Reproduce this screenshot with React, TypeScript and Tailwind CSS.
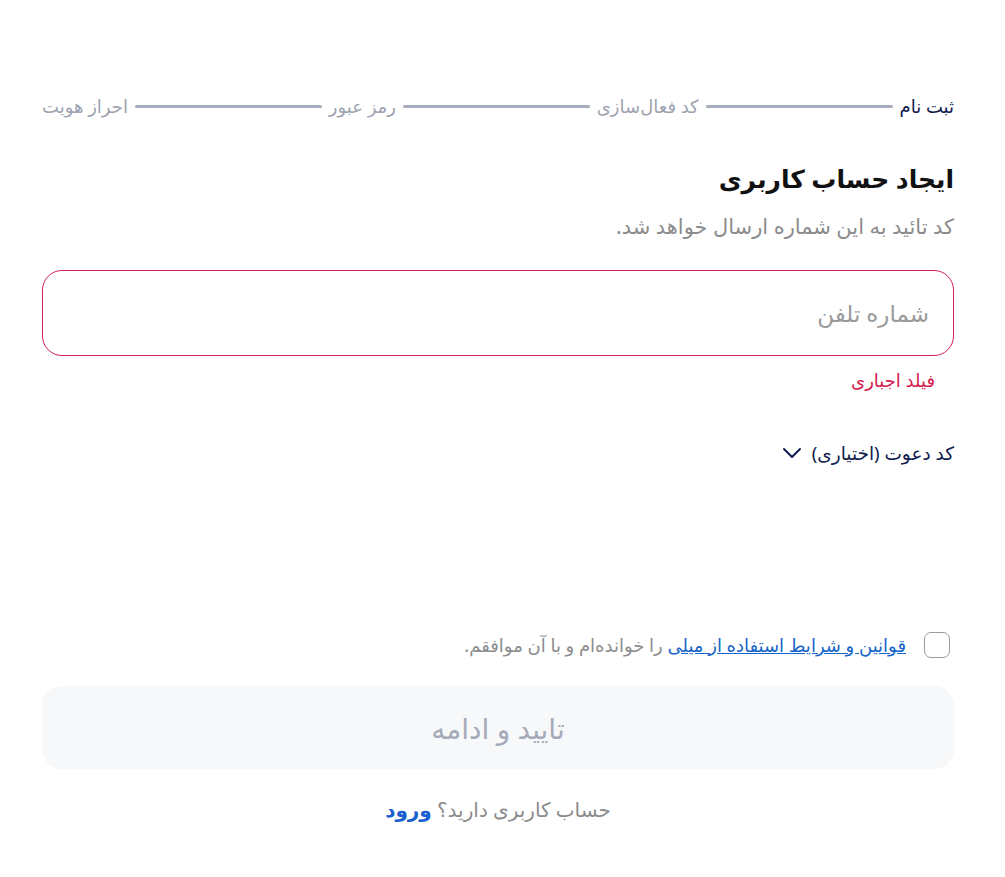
import React from "react";

const font = { fontFamily: '"Noto Sans", "DejaVu Sans", sans-serif' };

function Line() {
  return <div className="h-[3px] flex-1 rounded-full bg-[#a8adbd]" />;
}

export default function App() {
  return (
    <div dir="rtl" className="min-h-[877px] w-full bg-white" style={font}>
      <div className="ml-[42px] mr-[51px] flex flex-col pt-[92px]">
        <div className="flex h-[28px] items-center gap-[7px] text-[18px]">
          <span className="text-[#0f1c4d]">ثبت نام</span>
          <Line />
          <span className="text-[#9ea3b0]">کد فعال‌سازی</span>
          <Line />
          <span className="text-[#9ea3b0]">رمز عبور</span>
          <Line />
          <span className="text-[#9ea3b0]">احراز هویت</span>
        </div>

        <h1 className="mt-[40px] text-[25px] font-bold leading-[36px] text-[#111]">ایجاد حساب کاربری</h1>
        <p className="mt-[15px] text-[21px] leading-[30px] text-[#8c8c8c]">کد تائید به این شماره ارسال خواهد شد.</p>

        <div className="mt-[29px] flex h-[86px] items-center rounded-[20px] border border-[#d3204f] px-[24px]">
          <span className="text-[23px] text-[#9a9a9a]">شماره تلفن</span>
        </div>
        <div className="mt-[11px] pr-[19px] text-[18px] leading-[26px] text-[#d3204f]">فیلد اجباری</div>

        <div className="mt-[47px] flex h-[26px] items-center gap-[10px] text-[18.5px] text-[#0f1c4d]">
          <span>کد دعوت (اختیاری)</span>
          <svg width="20" height="12" viewBox="0 0 20 12" fill="none" stroke="#0f1c4d" strokeWidth="2" strokeLinecap="round" strokeLinejoin="round">
            <path d="M2 2l8 8 8-8" />
          </svg>
        </div>

        <div className="mt-[166px] flex h-[26px] items-center gap-[18px] pr-[4px] text-[18px] text-[#8c8c8c]">
          <div className="h-[26px] w-[26px] shrink-0 rounded-[7px] border-[1.5px] border-[#9a9a9a]" />
          <span>
            <a className="text-[#1565c8] underline">قوانین و شرایط استفاده از میلی</a> را خوانده‌ام و با آن موافقم.
          </span>
        </div>

        <button className="mt-[28px] flex h-[83px] items-center justify-center rounded-[20px] bg-[#f7f8fa] text-[28px] text-[#a6abb9]">
          تایید و ادامه
        </button>

        <div className="mt-[27px] text-center text-[20px] leading-[28px] text-[#8c8c8c]">
          حساب کاربری دارید؟ <span className="font-bold text-[#1a5fd0]">ورود</span>
        </div>
      </div>
    </div>
  );
}
